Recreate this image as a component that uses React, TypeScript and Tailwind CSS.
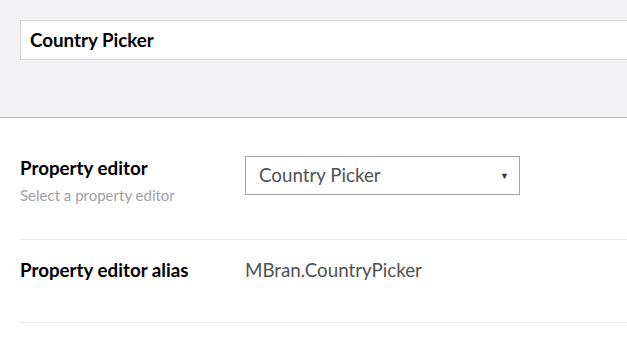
export default function App() {
  return (
    <div className="h-[345px] w-[627px] overflow-hidden bg-white font-['Lato',sans-serif]">
      <div className="h-[118px] border-b border-[#bbbbbb] bg-[#f3f3f5] pl-5 pt-5">
        <div className="flex h-10 w-[640px] items-center border border-[#d8d7d9] bg-white px-[9px] text-[18.75px] font-bold text-black">
          Country Picker
        </div>
      </div>

      <div className="pl-5">
        <div className="flex h-[122px] border-b border-[#e9e9eb] pt-[38px]">
          <div className="w-[225px]">
            <div className="text-[18.75px] font-bold leading-6 text-black">Property editor</div>
            <div className="mt-[6px] text-[15px] leading-[18px] text-[#a2a1a6]">Select a property editor</div>
          </div>
          <div className="flex h-[39px] w-[275px] items-center justify-between border border-[#a4a4a4] bg-white pl-[13px] pr-[10px] text-[18.75px] text-[#515151]">
            <span>Country Picker</span>
            <span className="text-[9px] text-[#333333]">▼</span>
          </div>
        </div>

        <div className="flex h-[83px] border-b border-[#e9e9eb] pt-[18px]">
          <div className="w-[225px] text-[18.75px] font-bold leading-6 text-black">Property editor alias</div>
          <div className="text-[18.75px] leading-6 text-[#515151]">MBran.CountryPicker</div>
        </div>
      </div>
    </div>
  );
}
